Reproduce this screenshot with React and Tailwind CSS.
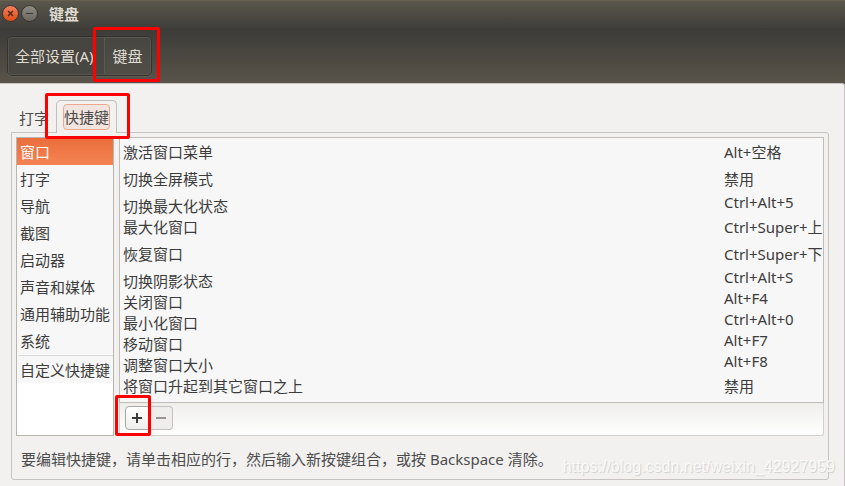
import React, { useState } from "react";
import clsx from "clsx";

const CATEGORIES = ["窗口", "打字", "导航", "截图", "启动器", "声音和媒体", "通用辅助功能", "系统"];
const CUSTOM = "自定义快捷键";

// tall rows are the ones whose accelerator holds a CJK glyph
const SHORTCUTS = [
  { name: "激活窗口菜单", keys: "Alt+空格", tall: true },
  { name: "切换全屏模式", keys: "禁用", tall: true },
  { name: "切换最大化状态", keys: "Ctrl+Alt+5" },
  { name: "最大化窗口", keys: "Ctrl+Super+上", tall: true },
  { name: "恢复窗口", keys: "Ctrl+Super+下", tall: true },
  { name: "切换阴影状态", keys: "Ctrl+Alt+S" },
  { name: "关闭窗口", keys: "Alt+F4" },
  { name: "最小化窗口", keys: "Ctrl+Alt+0" },
  { name: "移动窗口", keys: "Alt+F7" },
  { name: "调整窗口大小", keys: "Alt+F8" },
  { name: "将窗口升起到其它窗口之上", keys: "禁用", tall: true },
];

export default function App() {
  const [category, setCategory] = useState("窗口");

  return (
    <div className="relative min-h-screen flex flex-col bg-[#f2f1f0] text-[15px] text-[#3c3c3c] font-['Noto_Sans','Noto_Sans_CJK_SC',sans-serif]">
      <TitleBar />
      <Toolbar />

      <main className="flex-1 flex flex-col pt-4 pl-[11px] pr-[15px] pb-[6px] border-t border-r border-[#c9c5c0] rounded-tr-[3px] -mt-px">
        <Tabs />
        <section className="flex-1 flex flex-col border border-[#c6c3c0] rounded-b-[3px] rounded-tr-[3px] p-1">
          <div className="flex gap-[5px]">
            <nav className="w-[98px] shrink-0 bg-white border border-[#b9b6b2] flex flex-col">
              {CATEGORIES.map((c) => (
                <Category key={c} name={c} active={c === category} onClick={() => setCategory(c)} />
              ))}
              <hr className="ml-px mt-px border-[#d9d9d9]" />
              <Category name={CUSTOM} active={category === CUSTOM} onClick={() => setCategory(CUSTOM)} />
            </nav>

            <div className="flex-1 min-w-0 flex flex-col">
              <div className="bg-[#f7f7f7] border border-[#c0bdb9] pb-[3px]">
                <table className="w-full border-collapse">
                  <tbody>
                    {SHORTCUTS.map((s) => <Shortcut key={s.name} {...s} />)}
                  </tbody>
                </table>
              </div>
              <div className="h-[33px] pl-[5px] pt-[3px] flex items-start border border-t-0 border-[#d2d0cd] rounded-b-[3px] bg-linear-to-b from-[#efeeeb] to-white">
                <div className="relative">
                  <button aria-label="添加" className="w-6 h-6 flex items-center justify-center border border-[#aaa8a5] rounded-l-[4px] bg-linear-to-b from-white to-[#eeeeec]">
                    <svg width="10" height="10" viewBox="0 0 10 10"><path d="M5 0v10M0 5h10" stroke="#3c3c3c" strokeWidth="2" /></svg>
                  </button>
                  <Mark className="-top-[11px] -left-[10px] w-[36px] h-[41px]" />
                </div>
                <button aria-label="删除" disabled className="w-6 h-6 flex items-center justify-center border border-l-0 border-[#c4c2bf] rounded-r-[4px] bg-[#efeeed]">
                  <svg width="10" height="10" viewBox="0 0 10 10"><path d="M0 5h10" stroke="#9a9590" strokeWidth="2" /></svg>
                </button>
              </div>
            </div>
          </div>
          <p className="pl-[5px] pt-[11px] pb-1 leading-6 text-[#4c4c4c]">
            要编辑快捷键，请单击相应的行，然后输入新按键组合，或按 Backspace 清除。
          </p>
        </section>
      </main>

      <div className="absolute right-[10px] bottom-2 text-[16px] leading-[22px] text-[#f9f9f9] font-['Liberation_Sans',sans-serif] [text-shadow:1px_1px_1px_#cfcfcf] pointer-events-none">
        https://blog.csdn.net/weixin_42927959
      </div>
    </div>
  );
}

function TitleBar() {
  return (
    <header className="h-7 flex items-center pl-[2px] pb-[2px] border-t border-[#66614f] bg-linear-to-b from-[#5b574d] to-[#3f3e39]">
      <button aria-label="关闭" className="mr-[2px]">
        <svg width="17" height="17" viewBox="0 0 17 17">
          <defs>
            <linearGradient id="close" x1="0" y1="0" x2="0" y2="1">
              <stop offset="0" stopColor="#f5825c" />
              <stop offset="1" stopColor="#df4a16" />
            </linearGradient>
          </defs>
          <circle cx="8.5" cy="8.5" r="8" fill="url(#close)" stroke="#35332e" />
          <path d="M6 6l5 5M11 6l-5 5" stroke="#4a2416" strokeWidth="1.3" />
        </svg>
      </button>
      <button aria-label="最小化">
        <svg width="17" height="17" viewBox="0 0 17 17">
          <defs>
            <linearGradient id="min" x1="0" y1="0" x2="0" y2="1">
              <stop offset="0" stopColor="#8f8c84" />
              <stop offset="1" stopColor="#696760" />
            </linearGradient>
          </defs>
          <circle cx="8.5" cy="8.5" r="8" fill="url(#min)" stroke="#35332e" />
          <path d="M5 8.5h7" stroke="#3a3833" />
        </svg>
      </button>
      <h1 className="ml-[11px] text-[15px] leading-6 font-bold text-[#dfdbd2]">键盘</h1>
    </header>
  );
}

function Toolbar() {
  return (
    <div className="h-14 pt-2 pl-[7px] flex items-start border-b border-[#3a3934] bg-linear-to-b from-[#3c3b37] to-[#59544a] text-[#dfdbd2]">
      <div className="h-10 flex border border-[#33322e] rounded-[5px] bg-linear-to-b from-[#45443f] to-[#484741] shadow-[0_1px_0_#625e55]">
        <button className="w-[96px] pl-[6px] text-left whitespace-nowrap rounded-l-[4px] border border-r-0 border-[#55534c]">全部设置(A)</button>
        <button className="relative w-[47px] border border-[#5a5850] rounded-r-[4px] bg-linear-to-b from-[#474640] to-[#504e47]">
          键盘
          <Mark className="-top-[11px] -left-[12px] w-[67px] h-[55px]" />
        </button>
      </div>
    </div>
  );
}

function Tabs() {
  return (
    <div role="tablist" className="relative z-10 h-[33px] -mb-px flex items-end">
      <button role="tab" className="w-[45px] h-[28px] mb-px pl-2 text-left whitespace-nowrap text-[#4c4c4c]">打字</button>
      <button role="tab" aria-selected="true" className="relative w-[61px] h-[33px] px-[6px] pt-[3px] flex items-start border border-b-0 border-[#c0bdba] rounded-t-[5px] bg-[#f2f1f0]">
        <span className="w-full h-[26px] flex items-center justify-center whitespace-nowrap border border-[#f0a88c] rounded-[4px] bg-[#f2e4de] text-[#4c4c4c]">快捷键</span>
        <Mark className="-top-[8px] -left-[12px] w-[85px] h-[46px]" />
      </button>
    </div>
  );
}

function Category({ name, active, onClick }) {
  return (
    <button onClick={onClick}
      className={clsx("h-[27px] pl-[3px] pt-[2px] text-left leading-[25px] whitespace-nowrap",
        active ? "bg-linear-to-b from-[#ea6e3c] to-[#f58253] text-white" : "bg-[#f7f7f7]")}>
      {name}
    </button>
  );
}

function Shortcut({ name, keys, tall }) {
  return (
    <tr>
      <td className="p-0 pl-[3px]">
        <div className={clsx("leading-[29px]", tall ? "h-[27px]" : "h-[21px]")}>{name}</div>
      </td>
      <td className="p-0 w-[99px]">
        <div className={clsx("whitespace-nowrap", tall ? "h-[27px] leading-[29px]" : "h-[21px] leading-[21px]")}>{keys}</div>
      </td>
    </tr>
  );
}

// red outline drawn over the control it points out
function Mark({ className }) {
  return <span className={clsx("absolute z-20 border-3 border-[#fe0000] rounded-[2px] pointer-events-none", className)} />;
}
